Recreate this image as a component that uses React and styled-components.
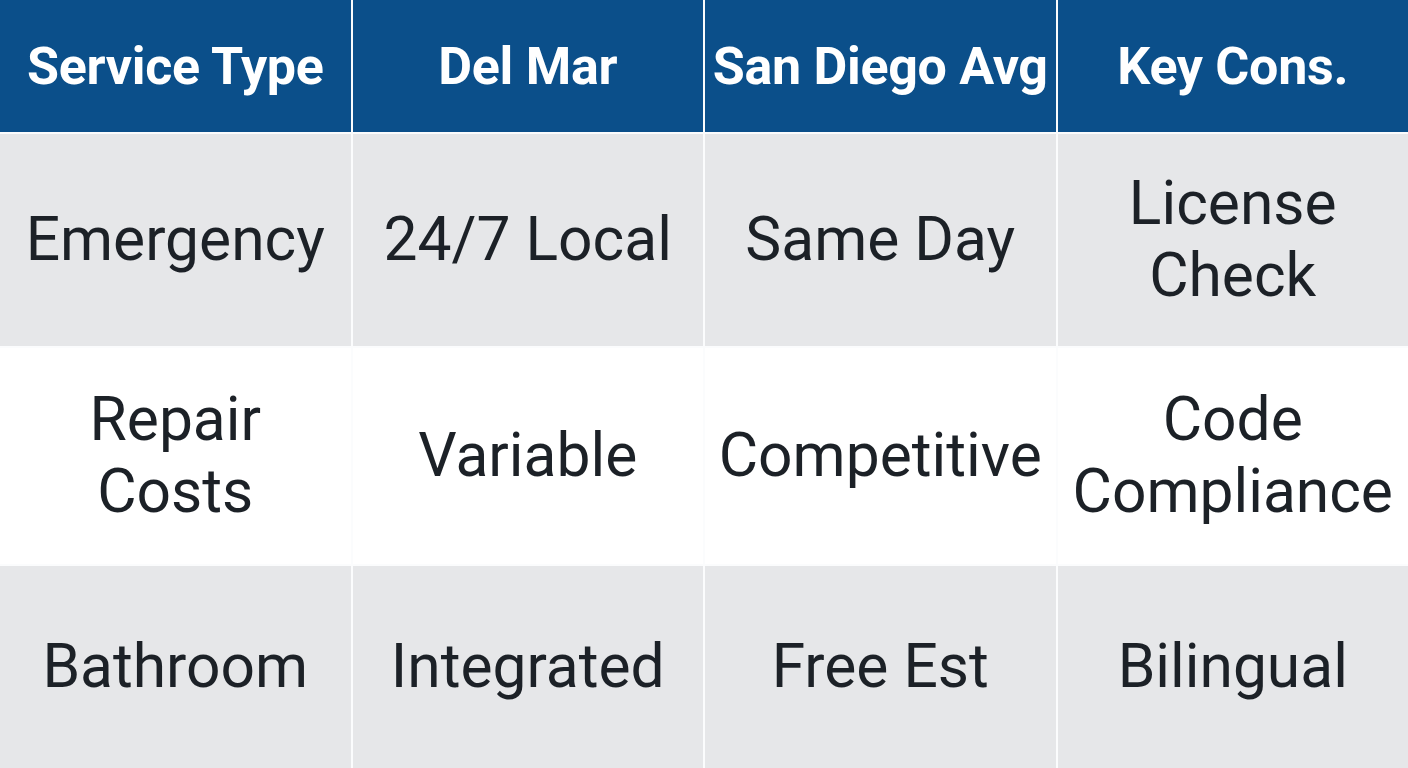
import React from "react";
import styled, { createGlobalStyle } from "styled-components";

const Global = createGlobalStyle`
  html, body { margin: 0; padding: 0; background: #ffffff; }
  body { font-family: Roboto, "Noto Sans", sans-serif; }
`;

const Table = styled.div`
  width: 1408px;
  height: 768px;
  display: grid;
  grid-template-columns: repeat(4, 1fr);
  grid-template-rows: 132px 212px 216px 1fr;
  gap: 2px;
  background: #fbfcfd;
  overflow: hidden;
`;

const HeadCell = styled.div`
  background: #0b4f8a;
  color: #ffffff;
  display: flex;
  align-items: center;
  justify-content: center;
  text-align: center;
  font-weight: 700;
  font-size: 52px;
  letter-spacing: -0.3px;
`;

const Cell = styled.div`
  background: ${(p) => (p.$alt ? "#ffffff" : "#e6e7e9")};
  color: #1c2127;
  display: flex;
  align-items: center;
  justify-content: center;
  text-align: center;
  font-size: 60.5px;
  line-height: 72px;
  font-weight: 400;
  padding: 0 6px;
`;

const headers = ["Service Type", "Del Mar", "San Diego Avg", "Key Cons."];
const rows = [
  ["Emergency", "24/7 Local", "Same Day", ["License", "Check"]],
  [["Repair", "Costs"], "Variable", "Competitive", ["Code", "Compliance"]],
  ["Bathroom", "Integrated", "Free Est", "Bilingual"],
];

export default function App() {
  return (
    <>
      <Global />
      <Table>
        {headers.map((h) => (
          <HeadCell key={h}>{h}</HeadCell>
        ))}
        {rows.map((r, i) =>
          r.map((c, j) => (
            <Cell key={`${i}-${j}`} $alt={i === 1}>
              {Array.isArray(c) ? (
                <span>
                  {c[0]}
                  <br />
                  {c[1]}
                </span>
              ) : (
                c
              )}
            </Cell>
          ))
        )}
      </Table>
    </>
  );
}
